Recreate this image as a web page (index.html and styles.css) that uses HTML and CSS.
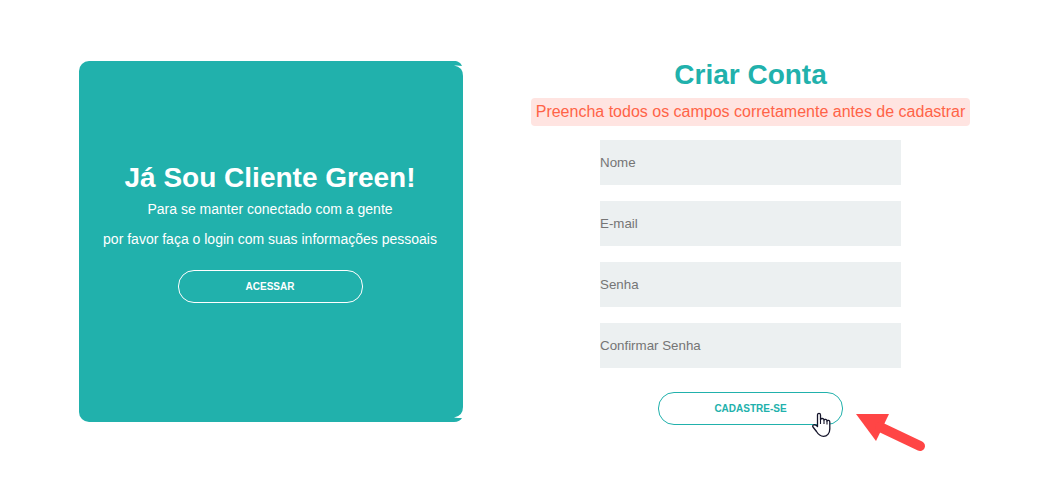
FILE: index.html
```html
<!DOCTYPE html>
<html lang="pt-BR">
<head>
  <meta charset="utf-8">
  <meta name="viewport" content="width=device-width, initial-scale=1">
  <title>Criar Conta</title>
  <link rel="stylesheet" href="styles.css">
</head>
<body>
  <main class="container">
    <section class="welcome">
      <svg class="corner corner-top" viewBox="0 0 12 15" aria-hidden="true">
        <path class="corner-gap" d="M0 0H12V15H0Z"/>
        <path class="corner-fill" d="M0 0H3C7 0 10 2 11 5Q7 4 3 4.600Q12 6 12 15H0Z"/>
      </svg>
      <h1 class="title title-light">Já Sou Cliente Green!</h1>
      <p class="description">Para se manter conectado com a gente</p>
      <p class="description">por favor faça o login com suas informações pessoais</p>
      <button class="btn btn-light" type="button">Acessar</button>
      <svg class="corner corner-bottom" viewBox="0 0 12 15" aria-hidden="true">
        <path class="corner-gap" d="M0 0H12V15H0Z"/>
        <path class="corner-fill" d="M0 0H3C7 0 10 2 11 4Q7 4 3 4.600Q12 6 12 15H0Z"/>
      </svg>
    </section>
    <section class="signup">
      <h2 class="title title-primary">Criar Conta</h2>
      <p class="message" role="alert">Preencha todos os campos corretamente antes de cadastrar</p>
      <form class="form">
        <input class="field" type="text" placeholder="Nome" aria-label="Nome">
        <input class="field" type="email" placeholder="E-mail" aria-label="E-mail">
        <input class="field" type="password" placeholder="Senha" aria-label="Senha">
        <input class="field" type="password" placeholder="Confirmar Senha" aria-label="Confirmar Senha">
        <div class="submit">
          <button class="btn btn-primary" type="button">Cadastre-se</button>
          <svg class="hand" viewBox="0 0 20 26" aria-hidden="true">
            <path fill="#fff" stroke="#15152b" stroke-width="1.300" stroke-linejoin="round" d="M5.500 14.500V3C5.500 .8 8.500 .8 8.500 3V7.500C9 6 12 6.200 12 8C12.700 6.800 15 7.200 15 9C15.700 7.800 17.800 8.300 17.800 10V17C17.800 21.500 15 24.300 11.500 24.300C8 24.300 6.300 22.500 4.500 19.500L1 15C0 13.200 2 12 4 13.300Z"/>
            <path fill="none" stroke="#15152b" stroke-width="1.100" d="M8.500 7V12M12 8V12M15 9V12.500"/>
          </svg>
          <svg class="arrow" viewBox="0 0 72 40" aria-hidden="true">
            <path fill="#ff4545" d="M1 1H34L21 28Z"/>
            <path stroke="#ff4545" stroke-width="10" stroke-linecap="round" d="M25 14L65 33"/>
          </svg>
        </div>
      </form>
    </section>
  </main>
</body>
</html>
```
FILE: styles.css
```css
* {
  box-sizing: border-box;
  margin: 0;
  padding: 0;
}

body {
  background: #fff;
  font-family: "Liberation Sans", Arial, sans-serif;
}

.container {
  display: grid;
  grid-template-columns: 2fr 3fr;
  padding: 61px 8px 52px 79px;
}

.welcome {
  position: relative;
  display: flex;
  flex-direction: column;
  align-items: center;
  align-self: start;
  padding: 100px 17px 119px 15px;
  border-radius: 10px 0 0 10px;
  background: #21b1ac;
  color: #fff;
  text-align: center;
}

.corner {
  position: absolute;
  right: 0;
  width: 12px;
  height: 15px;
}

.corner-top {
  top: 0;
}

.corner-bottom {
  bottom: 0;
  transform: scaleY(-1);
}

.corner-gap {
  fill: #fff;
}

.corner-fill {
  fill: #21b1ac;
}

.title {
  font-size: 28px;
  font-weight: bold;
  line-height: 33px;
}

.title-light {
  color: #fff;
}

.title-primary {
  margin-top: -3px;
  color: #21b1ac;
}

.description {
  font-size: 14px;
  line-height: 30px;
}

.btn {
  width: 185px;
  height: 33px;
  border: 1px solid;
  border-radius: 16px;
  font-family: inherit;
  font-size: 10px;
  font-weight: bold;
  text-transform: uppercase;
  cursor: pointer;
}

.btn-light {
  margin-top: 16px;
  border-color: #fff;
  background: none;
  color: #fff;
}

.btn-primary {
  border-color: #21b1ac;
  background: #fff;
  color: #21b1ac;
}

.signup {
  display: flex;
  flex-direction: column;
  align-items: center;
  padding-right: 1px;
}

.message {
  margin-top: 7px;
  padding: 0 5px;
  border-radius: 4px;
  background: #ffe4e1;
  color: #ff6347;
  font-size: 16px;
  line-height: 28px;
}

.form {
  display: flex;
  flex-direction: column;
  align-items: center;
  gap: 16px;
  width: 301px;
  margin-top: 14px;
}

.field {
  width: 100%;
  height: 45px;
  border: 0;
  background: #ecf0f1;
  font-family: inherit;
  color: #333;
}

.field::placeholder {
  color: #757575;
}

.submit {
  position: relative;
  display: flex;
  margin-top: 8px;
}

.hand {
  position: absolute;
  top: 20px;
  left: 154px;
  width: 20px;
  height: 26px;
}

.arrow {
  position: absolute;
  top: 21px;
  left: 197px;
  width: 72px;
  height: 40px;
}
```
